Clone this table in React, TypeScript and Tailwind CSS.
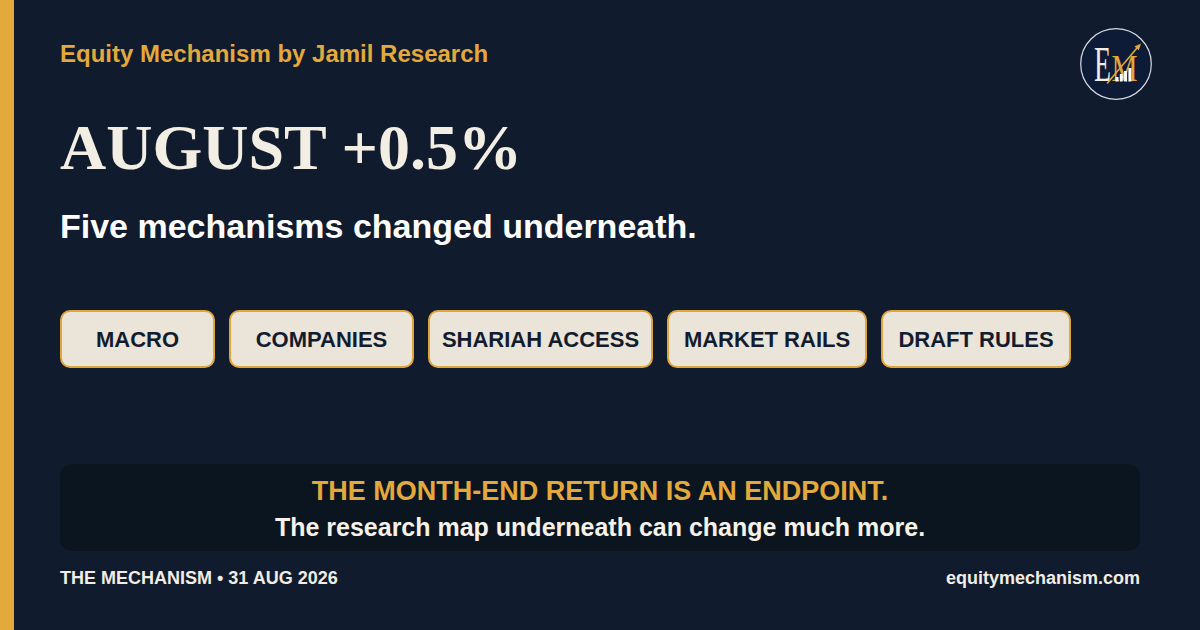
import React from "react";

const pills = [
  { label: "MACRO", w: "w-[155px]" },
  { label: "COMPANIES", w: "w-[185px]" },
  { label: "SHARIAH ACCESS", w: "w-[225px]" },
  { label: "MARKET RAILS", w: "w-[200px]" },
  { label: "DRAFT RULES", w: "w-[190px]" },
];

function Logo() {
  return (
    <svg width="72" height="72" viewBox="0 0 72 72">
      <circle cx="36" cy="36" r="35.3" fill="#0d1b36" stroke="#d9dce2" strokeWidth="1.2" />
      <text
        x="14"
        y="53"
        fontSize="50"
        fill="#f3ece0"
        fontFamily="'Liberation Serif', serif"
        textLength="17"
        lengthAdjust="spacingAndGlyphs"
      >
        E
      </text>
      <text
        x="31.5"
        y="53"
        fontSize="37"
        fill="#e0a73a"
        fontFamily="'Liberation Serif', serif"
        textLength="26"
        lengthAdjust="spacingAndGlyphs"
      >
        M
      </text>
      <rect x="35.5" y="49" width="3" height="4.5" fill="#ffffff" />
      <rect x="39.8" y="46" width="3" height="7.5" fill="#ffffff" />
      <rect x="44.1" y="43" width="3" height="10.5" fill="#ffffff" />
      <rect x="48.4" y="40" width="3" height="13.5" fill="#ffffff" />
      <line x1="27.5" y1="55" x2="57" y2="20" stroke="#e0a73a" strokeWidth="1.6" strokeLinecap="round" />
      <polygon points="61,15.5 54.5,18.5 58.8,22.2" fill="#e0a73a" />
    </svg>
  );
}

export default function App() {
  return (
    <div
      className="w-[1200px] h-[630px] flex bg-[#101b2d] overflow-hidden"
      style={{ fontFamily: "'Liberation Sans', Arial, sans-serif" }}
    >
      <div className="w-[14px] shrink-0 bg-[#e3a93b]" />
      <div className="flex-1 flex flex-col pl-[46px] pr-[60px]">
        <div className="flex justify-between items-start pt-[28px] h-[68px]">
          <div className="mt-[12px] text-[24px] leading-[28px] font-bold text-[#e3a93b]">
            Equity Mechanism by Jamil Research
          </div>
          <div className="-mr-[12px]">
            <Logo />
          </div>
        </div>
        <div
          className="mt-[48px] text-[64px] leading-[64px] font-bold text-[#f3eee4]"
          style={{ fontFamily: "'Liberation Serif', 'Times New Roman', serif" }}
        >
          AUGUST +0.5%
        </div>
        <div className="mt-[29px] text-[34px] leading-[34px] font-bold text-white">
          Five mechanisms changed underneath.
        </div>
        <div className="mt-[67px] flex gap-[14px]">
          {pills.map((p) => (
            <div
              key={p.label}
              className={`${p.w} h-[58px] flex items-center justify-center rounded-[10px] border-2 border-[#e0a53a] bg-[#eae4d9] text-[22px] font-bold text-[#121c2e]`}
            >
              {p.label}
            </div>
          ))}
        </div>
        <div className="mt-[96px] h-[87px] rounded-[12px] bg-[#0b1520] pt-[9px] flex flex-col items-center">
          <div className="text-[27px] leading-[36px] font-bold text-[#e3a93b]">
            THE MONTH-END RETURN IS AN ENDPOINT.
          </div>
          <div className="text-[25px] leading-[36px] font-bold text-[#f6f2ea]">
            The research map underneath can change much more.
          </div>
        </div>
        <div className="mt-[18px] flex justify-between text-[18px] leading-[18px] font-bold text-[#f1ede6]">
          <div>THE MECHANISM • 31 AUG 2026</div>
          <div>equitymechanism.com</div>
        </div>
      </div>
    </div>
  );
}
